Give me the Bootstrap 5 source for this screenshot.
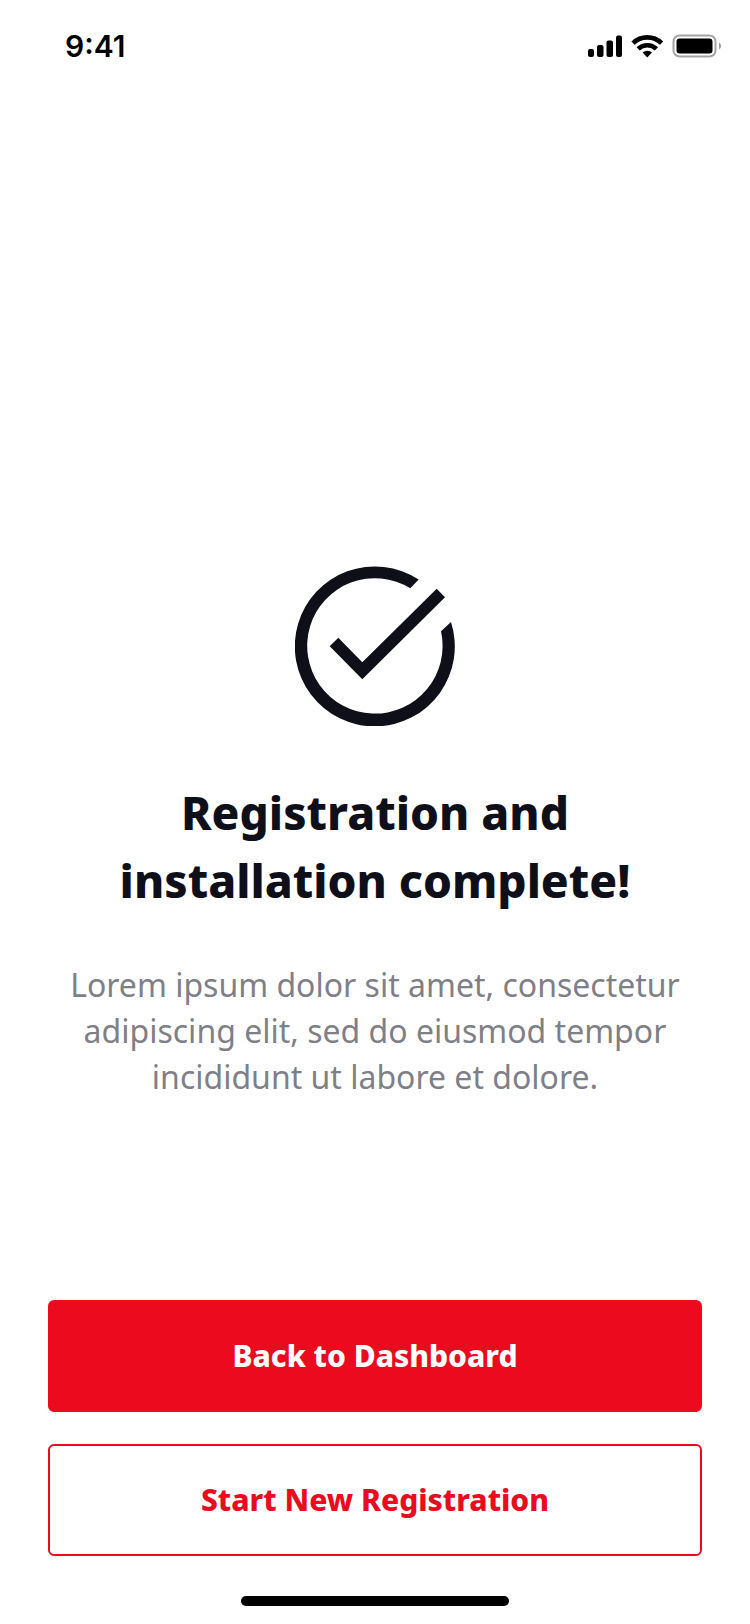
<!DOCTYPE html>
<html lang="en">
<head>
<meta charset="utf-8">
<meta name="viewport" content="width=device-width, initial-scale=1">
<title>Registration complete</title>
<link href="https://cdn.jsdelivr.net/npm/bootstrap@5.3.0/dist/css/bootstrap.min.css" rel="stylesheet">
<style>
  body { font-family: "Noto Sans", "Open Sans", sans-serif; background: #fff; color: #0f0f19; }
  .status-bar { padding: 28px 28px 0 65px; height: 64px; }
  .clock { font: 600 30px/36px Inter, "Liberation Sans", sans-serif; color: #000; }
  .message { padding: 0 48px 200px; }
  .headline { font-size: 46px; line-height: 68px; font-weight: 800; margin: 52px 0 48px; max-width: 600px; }
  .lede { font-size: 32px; line-height: 46px; color: #7f7f87; max-width: 630px; }
  .actions { padding: 0 48px 40px; gap: 32px; }
  .action-btn {
    --bs-btn-padding-y: 31px;
    --bs-btn-font-size: 30px;
    --bs-btn-line-height: 46px;
    --bs-btn-font-weight: 800;
    --bs-btn-border-width: 2px;
    --bs-btn-border-radius: 6px;
    --bs-btn-border-color: #eb0a1e;
    --bs-btn-hover-border-color: #c40819;
    --bs-btn-hover-bg: #c40819;
    --bs-btn-hover-color: #fff;
  }
  .action-main { --bs-btn-bg: #eb0a1e; --bs-btn-color: #fff; }
  .action-alt { --bs-btn-bg: #fff; --bs-btn-color: #eb0a1e; }
  .home-bar { width: 268px; height: 10px; background: #000; margin-bottom: 18px; }
</style>
</head>
<body>
<div class="d-flex flex-column min-vh-100">
  <header class="status-bar d-flex align-items-center justify-content-between">
    <span class="clock">9:41</span>
    <svg width="134" height="24" viewBox="0 0 134 24" aria-label="Signal, Wi-Fi and battery full" role="img">
      <rect x="0" y="15" width="6" height="8" rx="2"/>
      <rect x="9" y="11" width="6.500" height="12" rx="2"/>
      <rect x="18.500" y="6.500" width="6.500" height="16.500" rx="2"/>
      <rect x="28" y="1.500" width="6" height="21.500" rx="2"/>
      <g fill="none" stroke="#000" stroke-width="4.600">
        <path d="M45 9.200a20.500 20.500 0 0 1 28.600 0"/>
        <path d="M50.200 14.900a13 13 0 0 1 18.200 0"/>
      </g>
      <path d="M59.300 23.400l-4.700-4.800a6.900 6.900 0 0 1 9.400 0z"/>
      <rect x="85.500" y="1.500" width="42" height="21" rx="6" fill="none" stroke="#000" stroke-opacity=".36" stroke-width="2"/>
      <rect x="88.500" y="4.500" width="36" height="15" rx="3"/>
      <path d="M131 8.500a4 4 0 0 1 0 7z" fill-opacity=".4"/>
    </svg>
  </header>

  <main class="message flex-grow-1 d-flex flex-column align-items-center justify-content-end text-center">
    <svg width="160" height="160" viewBox="0 0 160 160" fill="#0f0f19" aria-hidden="true">
      <path d="M123.700 13.500A80 80 0 1 0 156 56L146 65.300A67.700 67.700 0 1 1 115.300 22.200z"/>
      <path d="M34.700 80.300L43.300 71.700 67.300 96.300 141.700 22.700 150 31.300 67.300 113.300z"/>
    </svg>
    <h1 class="headline">Registration and installation complete!</h1>
    <p class="lede mb-0">Lorem ipsum dolor sit amet, consectetur adipiscing elit, sed do eiusmod tempor incididunt ut labore et dolore.</p>
  </main>

  <div class="actions d-grid">
    <button type="button" class="btn action-btn action-main">Back to Dashboard</button>
    <button type="button" class="btn action-btn action-alt">Start New Registration</button>
  </div>
  <div class="home-bar rounded-pill mx-auto"></div>
</div>
<script src="https://cdn.jsdelivr.net/npm/bootstrap@5.3.0/dist/js/bootstrap.bundle.min.js"></script>
</body>
</html>
